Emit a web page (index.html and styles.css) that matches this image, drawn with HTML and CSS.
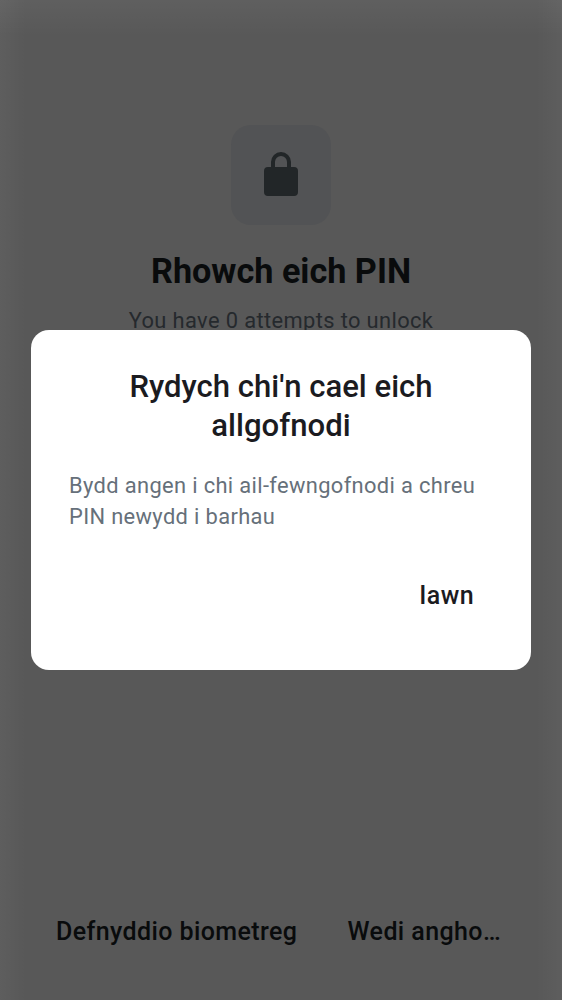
FILE: index.html
```html
<!DOCTYPE html>
<html lang="cy">
<head>
<meta charset="utf-8">
<title>Rhowch eich PIN</title>
<link rel="stylesheet" href="styles.css">
</head>
<body>
<main class="screen">
  <div class="lock-tile">
    <svg class="lock" viewBox="0 0 34 44"><path fill-rule="evenodd" d="M7 15V10a10 10 0 0 1 20 0v5h3a4 4 0 0 1 4 4v21a4 4 0 0 1-4 4H4a4 4 0 0 1-4-4V19a4 4 0 0 1 4-4zM11 15h12v-5a6 6 0 0 0-12 0z"/></svg>
  </div>
  <h1 class="title">Rhowch eich PIN</h1>
  <p class="attempts">You have 0 attempts to unlock</p>
  <footer class="actions"><span class="action">Defnyddio biometreg</span><span class="action">Wedi angho…</span></footer>
</main>
<div class="overlay">
  <section class="dialog" role="dialog">
    <h2 class="dialog-title">Rydych chi'n cael eich<br>allgofnodi</h2>
    <p class="dialog-text">Bydd angen i chi ail-fewngofnodi a chreu<br>PIN newydd i barhau</p>
    <div class="dialog-actions"><span>Iawn</span></div>
  </section>
</div>
</body>
</html>
```
FILE: styles.css
```css
* { box-sizing: border-box; margin: 0; padding: 0; }
body { height: 1000px; overflow: hidden; font-family: Roboto, sans-serif; background: #585858; }
.screen {
  height: 1000px;
  padding: 125px 56px 52px;
  display: flex;
  flex-direction: column;
  align-items: center;
  background:
    linear-gradient(to bottom, rgba(255, 255, 255, .045), transparent 36px),
    linear-gradient(to right, rgba(255, 255, 255, .035), transparent 26px, transparent calc(100% - 26px), rgba(255, 255, 255, .035));
}
.lock-tile { width: 100px; height: 100px; border-radius: 20px; background: #525355; display: flex; align-items: center; justify-content: center; }
.lock { width: 34px; height: 44px; fill: #222628; margin-top: -2px; }
.title { margin-top: 25px; font-size: 34.2px; line-height: 42px; font-weight: 700; color: #090b0c; white-space: nowrap; }
.attempts { margin-top: 14px; font-size: 21.86px; line-height: 30px; letter-spacing: .38px; color: #25292d; white-space: nowrap; }
.actions { margin-top: auto; width: 100%; padding-right: 5px; display: flex; justify-content: space-between; font-size: 25px; line-height: 32px; font-weight: 500; letter-spacing: .4px; color: #090b0c; white-space: nowrap; }
.overlay { position: absolute; inset: 0; display: flex; align-items: center; justify-content: center; }
.dialog { width: 500px; height: 340px; padding: 37px 38px; border-radius: 18px; background: #fff; }
.dialog-title { text-align: center; font-size: 31.1px; line-height: 39px; font-weight: 500; color: #1b1b1f; }
.dialog-text { margin-top: 25px; font-size: 21.86px; line-height: 31px; letter-spacing: .36px; color: #66707a; white-space: nowrap; }
.dialog-actions { margin-top: 49px; padding-right: 19px; display: flex; justify-content: flex-end; font-size: 25px; line-height: 30px; font-weight: 500; letter-spacing: .4px; color: #1b1b1f; }
```
